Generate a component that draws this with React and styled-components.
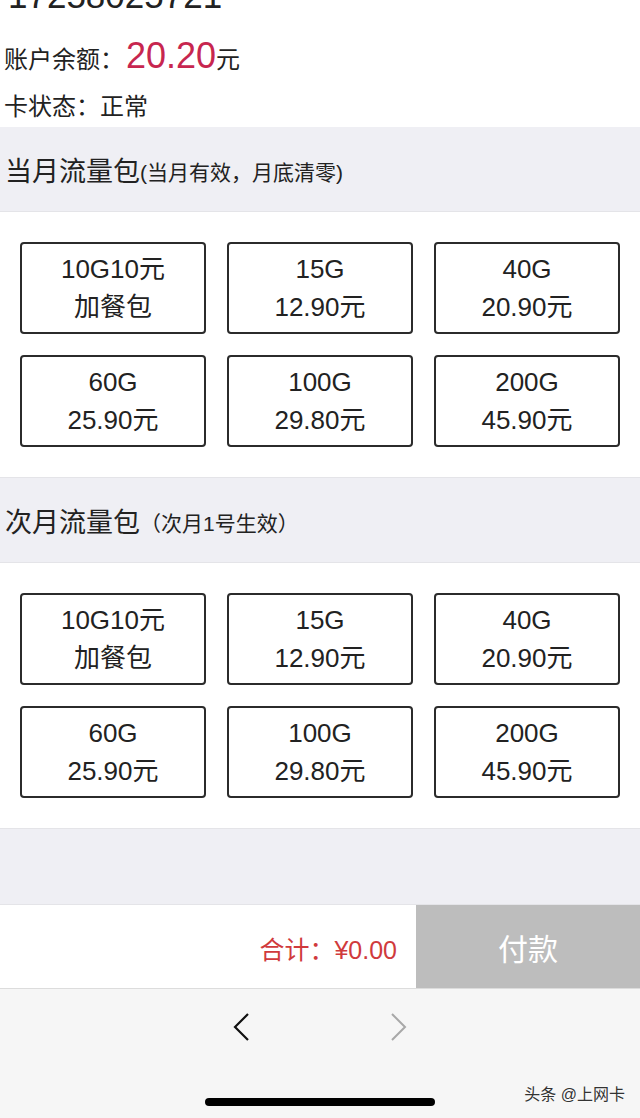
import React from "react";
import styled, { createGlobalStyle } from "styled-components";

const GlobalStyle = createGlobalStyle`
  body {
    margin: 0;
    background: #fff;
    font-family: "Liberation Sans", "Noto Sans CJK SC", sans-serif;
    color: #222;
    overflow: hidden;
  }
`;

const Page = styled.div`
  width: 640px;
  height: 1118px;
  display: flex;
  flex-direction: column;
  position: relative;
  overflow: hidden;
`;

const Info = styled.div`
  padding-left: 4px;
`;

const Phone = styled.div`
  font-size: 35px;
  line-height: 35px;
  height: 35px;
  margin-top: -22px;
  margin-bottom: 25px;
  padding-left: 4px;
  color: #222;
`;

const InfoRow = styled.div`
  font-size: 24px;
  height: ${(p) => p.$h}px;
  line-height: ${(p) => p.$h - (p.$pt || 0)}px;
  padding-top: ${(p) => p.$pt || 0}px;
  box-sizing: border-box;
  white-space: nowrap;
`;

const Balance = styled.span`
  font-size: 36px;
  line-height: 1;
  color: #c7264f;
  padding-left: 2px;
`;

const SectionHead = styled.div`
  height: 84px;
  flex-shrink: 0;
  background: #efeff4;
  border-top: ${(p) => (p.$top ? "1px solid #e4e4e8" : "none")};
  border-bottom: 1px solid #e4e4e8;
  display: flex;
  align-items: center;
  padding-left: 5px;
  white-space: nowrap;
`;

const HeadTitle = styled.span`
  font-size: 27px;
  color: #222;
`;

const HeadNote = styled.span`
  font-size: 21px;
  color: #222;
  margin-top: 3px;
`;

const Grid = styled.div`
  display: grid;
  grid-template-columns: repeat(3, 1fr);
  gap: 21px;
  padding: 30px 20px;
  background: #fff;
`;

const Pack = styled.div`
  height: 88px;
  border: 2px solid #2b2b2b;
  border-radius: 4px;
  display: flex;
  flex-direction: column;
  align-items: center;
  justify-content: center;
  font-size: 26px;
  line-height: 38px;
  color: #222;
`;

const Spacer = styled.div`
  height: 75px;
  flex-shrink: 0;
  background: #efeff4;
  border-top: 1px solid #e4e4e8;
  border-bottom: 1px solid #e4e4e8;
`;

const Footer = styled.div`
  height: 83px;
  flex-shrink: 0;
  display: flex;
  background: #fff;
  border-bottom: 1px solid #dcdcdc;
`;

const Total = styled.div`
  flex: 1;
  display: flex;
  align-items: center;
  justify-content: flex-end;
  padding-right: 19px;
  font-size: 25px;
  color: #d03a3c;
  padding-top: 2px;
`;

const PayButton = styled.button`
  width: 224px;
  border: none;
  background: #bdbdbd;
  color: #fff;
  font-family: inherit;
  font-size: 30px;
  padding: 0;
`;

const Nav = styled.div`
  flex: 1;
  background: #f6f6f6;
  display: flex;
  flex-direction: column;
  align-items: center;
`;

const Arrows = styled.div`
  display: flex;
  gap: 140px;
  margin-top: 24px;
`;

const Arrow = styled.svg`
  display: block;
  width: 17px;
  height: 28px;
  stroke: ${(p) => (p.$muted ? "#a8a8a8" : "#111")};
`;

const HomeBar = styled.div`
  width: 230px;
  height: 8px;
  border-radius: 4px;
  background: #000;
  margin-top: auto;
  margin-bottom: 12px;
`;

const Watermark = styled.div`
  position: absolute;
  right: 15px;
  bottom: 13px;
  font-size: 16px;
  color: #333;
  text-shadow: 0 0 2px #fff;
`;

const packs = [
  ["10G10元", "加餐包"],
  ["15G", "12.90元"],
  ["40G", "20.90元"],
  ["60G", "25.90元"],
  ["100G", "29.80元"],
  ["200G", "45.90元"],
];

const PackGrid = () => (
  <Grid>
    {packs.map(([a, b]) => (
      <Pack key={a}>
        <div>{a}</div>
        <div>{b}</div>
      </Pack>
    ))}
  </Grid>
);

export default function App() {
  return (
    <>
      <GlobalStyle />
      <Page>
        <Info>
          <Phone>17258025721</Phone>
          <InfoRow $h={44}>
            账户余额：<Balance>20.20</Balance>元
          </InfoRow>
          <InfoRow $h={45} $pt={4}>
            卡状态：正常
          </InfoRow>
        </Info>

        <SectionHead>
          <HeadTitle>当月流量包</HeadTitle>
          <HeadNote>(当月有效，月底清零)</HeadNote>
        </SectionHead>
        <PackGrid />

        <SectionHead $top>
          <HeadTitle>次月流量包</HeadTitle>
          <HeadNote>（次月1号生效）</HeadNote>
        </SectionHead>
        <PackGrid />

        <Spacer />

        <Footer>
          <Total>合计：¥0.00</Total>
          <PayButton type="button">付款</PayButton>
        </Footer>

        <Nav>
          <Arrows>
            <Arrow viewBox="0 0 17 28" fill="none" strokeWidth="2.2">
              <polyline points="15,1 2,14 15,27" />
            </Arrow>
            <Arrow viewBox="0 0 17 28" fill="none" strokeWidth="2" $muted>
              <polyline points="2,1 15,14 2,27" />
            </Arrow>
          </Arrows>
          <HomeBar />
        </Nav>
        <Watermark>头条 @上网卡</Watermark>
      </Page>
    </>
  );
}
